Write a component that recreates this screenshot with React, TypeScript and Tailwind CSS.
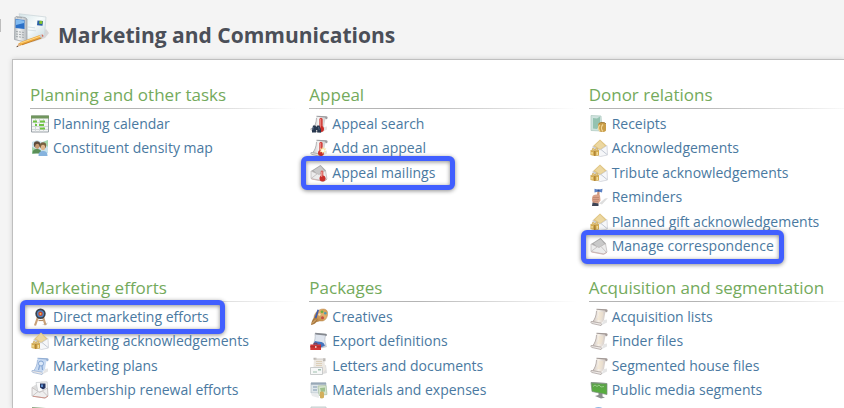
import type { ReactNode } from "react";

interface TaskLink {
  label: string;
  icon: ReactNode;
  highlight?: string;
}

interface TaskGroup {
  title: string;
  links: TaskLink[];
}

function Icon({ children }: { children: ReactNode }) {
  return (
    <svg viewBox="0 0 18 18" className="h-[18px] w-[18px] shrink-0" aria-hidden="true">
      <defs>
        <linearGradient id="paper" x1="0" y1="0" x2="1" y2="0">
          <stop offset="0" stopColor="#c9c0bc" />
          <stop offset="0.45" stopColor="#f6f0e8" />
          <stop offset="1" stopColor="#cfc6c1" />
        </linearGradient>
        <linearGradient id="silver" x1="0" y1="0" x2="1" y2="0">
          <stop offset="0" stopColor="#c4c4c4" />
          <stop offset="0.45" stopColor="#f4f4f4" />
          <stop offset="1" stopColor="#cdcdcd" />
        </linearGradient>
        <linearGradient id="wood" x1="0" y1="1" x2="1" y2="0">
          <stop offset="0" stopColor="#b07b3c" />
          <stop offset="0.6" stopColor="#e3b06c" />
          <stop offset="1" stopColor="#d0924c" />
        </linearGradient>
        <linearGradient id="screen" x1="0" y1="0" x2="0" y2="1">
          <stop offset="0" stopColor="#5da04c" />
          <stop offset="1" stopColor="#56b13b" />
        </linearGradient>
      </defs>
      {children}
    </svg>
  );
}

function CalendarIcon() {
  return (
    <Icon>
      <path d="M.5 1h17v16H.5z" fill="#f4f5f6" stroke="#9ba2a8" />
      <path d="M0 .5h18v3H0z" fill="#71965e" />
      <path d="M1 7.5h16M1 11.5h16M1 14.5h16M4.5 4v12.500M8.500 4v12.500M12.500 4v12.500" stroke="#d3d8da" fill="none" />
      <path d="M2 6.500h4M9 6.500h5M8 10h5M4 10h2M9 13.500h5" stroke="#70c443" strokeWidth="1.800" />
    </Icon>
  );
}

function MapIcon() {
  return (
    <Icon>
      <path d="M1 3l5-2 5 2 6-2v13l-6 2-5-2-5 1z" fill="#c9e3ec" />
      <path d="M1 8l4 2v4l-4 1zM12 3l5-2v7z" fill="#a5d7ac" />
      <circle cx="6" cy="5.500" r="3.200" fill="#5b4b3c" />
      <ellipse cx="6.300" cy="7.300" rx="2.200" ry="2.600" fill="#c79b73" />
      <path d="M1.500 14.500c0-3.500 2-4.500 4.500-4.500s4.500 1 4.500 4.500z" fill="#5b8f57" />
      <circle cx="12" cy="6.500" r="3.200" fill="#77603f" />
      <ellipse cx="12" cy="8.500" rx="2.200" ry="2.700" fill="#dfb68d" />
      <path d="M7.500 17c0-4 2-5 4.500-5s4.500 1 4.500 5z" fill="#86b3de" />
    </Icon>
  );
}

function Scroll({ fill = "url(#paper)", edge = "#a39a97" }: { fill?: string; edge?: string }) {
  return (
    <>
      <path d="M11 17.500l6-3v-3l-3 .5z" fill="#d4d4d4" opacity=".6" />
      <path d="M6.500 1.500h9.500c-.8 3.500-1.500 7-2 10.500l-3 4L2.500 14C5 11 6.500 7 6.500 1.500z" fill={fill} />
      <path d="M6.500 3c-.2 4.500-1.500 8-4 11" fill="none" stroke={edge} strokeWidth=".7" />
      <path d="M6.500.8l10 .5c1.500.3 1.500 2.500.2 3l-1.300-.2c.3-1-.2-1.600-1-1.600L6.500 1.800z" fill={edge} />
      <path d="M1 13.500l9.500 1.500c1 .5 1.500 2 .5 2.500L2 15.500c-1-.4-1.400-1.200-1-2z" fill="#efebe8" stroke={edge} strokeWidth=".7" />
    </>
  );
}

function ScrollIcon() {
  return (
    <Icon>
      <Scroll />
      <path d="M8.500 5h4.500M8.500 7h4.500M8 9h4.500M7 11h4.500" stroke="#f1e2c8" />
    </Icon>
  );
}

function PlanIcon() {
  return (
    <Icon>
      <Scroll fill="#c8daf1" edge="#93aed3" />
      <circle cx="10" cy="6.500" r="2.500" fill="#dbe8f8" stroke="#84a5d3" />
      <path d="M8.500 9l-1 4M11 9l.5 4" stroke="#84a5d3" strokeWidth="1.200" />
    </Icon>
  );
}

function Thermometer() {
  return (
    <>
      <path d="M11 4.500v8" stroke="#d4453f" strokeWidth="3.400" strokeLinecap="round" />
      <circle cx="11" cy="14" r="3" fill="#cb2f2a" />
      <path d="M10.300 4v8.500" stroke="#f4a59e" strokeWidth=".8" />
    </>
  );
}

function AppealSearchIcon() {
  return (
    <Icon>
      <Scroll fill="url(#silver)" edge="#9d9da0" />
      <Thermometer />
      <path d="M3 10.500h2.500l.8 1.500 1-1.500H9.500l1.500 4.500v2.500H7.200V15h-1v2.500H2V15z" fill="#29384f" />
      <path d="M3.500 12l-.8 3M8.500 12l.8 3" stroke="#5a7090" strokeWidth=".8" />
    </Icon>
  );
}

function AddAppealIcon() {
  return (
    <Icon>
      <Scroll fill="url(#silver)" edge="#9d9da0" />
      <Thermometer />
      <path d="M13 7.500l1 2.200 2.300-.4-1.300 2.200 1.300 1.800-2.400-.2-.9 2.200-1.100-2.200-2.200.2 1.400-1.800-1.200-2.200 2.200.4z" fill="#fbe7a2" />
      <circle cx="13" cy="11.500" r="1.500" fill="#fffbe8" />
    </Icon>
  );
}

function OpenEnvelope() {
  return (
    <>
      <path d="M1 7L10.500 1l5.500 5.500-2 5-8 1z" fill="#a9a9a9" />
      <path d="M3.500 6.500l7-4.500 4 5-6 4z" fill="#c9c9c9" />
      <path d="M1 7l8 3.500 6.500-4 1.500 8.500-3 2L1 14.500z" fill="#ececec" stroke="#b9b5b5" strokeWidth=".7" />
      <path d="M1 14.500L7 10M11 9.500l5.500 6" fill="none" stroke="#bfbbbb" strokeWidth=".8" />
      <path d="M1.500 15l12 2.300 3.500-2" fill="none" stroke="#c9a9a6" strokeWidth=".8" />
    </>
  );
}

function MailingIcon() {
  return (
    <Icon>
      <OpenEnvelope />
      <path d="M12 8v6" stroke="#dc6963" strokeWidth="2.800" strokeLinecap="round" />
      <circle cx="12.500" cy="14.500" r="3" fill="#c9302c" />
      <path d="M11.700 8v5" stroke="#f4b1ab" strokeWidth=".8" />
    </Icon>
  );
}

function EnvelopeIcon() {
  return (
    <Icon>
      <OpenEnvelope />
    </Icon>
  );
}

function RenewalIcon() {
  return (
    <Icon>
      <path d="M1 6L10 .5h6.500l.5 14-3 2.500L1 15z" fill="#dedede" />
      <path d="M5 1.500l11-.5.500 8L7 11z" fill="#fbfbfb" stroke="#c6c8cc" strokeWidth=".7" />
      <path d="M1 6.500l7.500 5L16.500 7l.5 8-3 2L1 15z" fill="#efefef" stroke="#bbb6b6" strokeWidth=".7" />
      <path d="M9 2.500h5.500v4.500l-2.500 1.500-3-2z" fill="#243563" />
      <path d="M10 3.500h2V6h-2z" fill="#5f8fd0" />
      <path d="M1.500 15l5.500-4.500M11.500 10l5 5" stroke="#c0bbbb" strokeWidth=".8" />
      <path d="M2 15.300l12 1.700 3-2" fill="none" stroke="#cc8e83" strokeWidth=".9" />
    </Icon>
  );
}

function ReceiptIcon() {
  return (
    <Icon>
      <path d="M1 .5l10 .5 1 15-11-.5z" fill="#cfe3de" stroke="#b3cdc4" strokeWidth=".8" />
      <path d="M3 3l4 .5 3-2v8L7 14l-4-.5z" fill="#94c2b0" />
      <path d="M8 9c1.500-2.500 8-2.500 8 .5v6c-1.500 2-5 2-7 .5z" fill="#c99d48" />
      <path d="M10 10c-2 1.500-2 4.500 0 6M13 9.500c-2 2-2 5 0 7" fill="none" stroke="#f1d595" strokeWidth="1.300" />
      <path d="M9 8.500c2-1.500 6-1.500 7 .5" fill="none" stroke="#94702f" strokeWidth=".8" />
    </Icon>
  );
}

function AcknowledgementIcon() {
  return (
    <Icon>
      <path d="M2.500 7.500L10 .5l7 6.500-7 5z" fill="#e0c583" />
      <path d="M5 6.500L10 1.800 15 7l-5 3z" fill="#ecd7a0" />
      <path d="M3 7.500l7 3.500 7-4.500.5 9.500-7 1.500L3 15z" fill="#f6f7f9" stroke="#c8ccd4" strokeWidth=".7" />
      <path d="M11 10.500l6 5M3.500 8l5 4" stroke="#bcc4d0" strokeWidth=".9" />
      <path d="M.5 11l4 .5 4.500-.5v5.500l-4.500.5-4-1z" fill="#d3ab50" />
      <path d="M2 10c1-1.500 2.500-.5 3 .8.500-1.300 2-2.300 3-.8.300 1-2 1.500-3 1.300-1 .2-3.300-.3-3-1.300z" fill="#f0d78e" stroke="#b98d3a" strokeWidth=".5" />
      <path d="M4.200 12h1.200v5H4.200z" fill="#a97c31" />
      <path d="M6.500 13H8v3H6.500zM1.300 13h1.500v2.500H1.300z" fill="#f3dc98" />
    </Icon>
  );
}

function ReminderIcon() {
  return (
    <Icon>
      <path d="M9 15.500l6-5 3-.5-6 6.500z" fill="#dedede" />
      <path d="M7 7l.5-4.500h2L9.500 8z" fill="#cb947b" />
      <path d="M3 7.500c2-1.500 5.500-1.500 7 0l.5 5-2.500 3.500-5-1c-1.500-2-1.500-5.500 0-7.500z" fill="#d9a289" />
      <path d="M3 9.500h6M3 11.500h6M3 13.300h5" stroke="#b8806b" strokeWidth=".7" />
      <path d="M2.500 14.500l6 1V18h-6.500z" fill="#3d4455" />
      <path d="M4.500.8l4 1 4-1-.5 3.700-3.500-1-4 1z" fill="#5c82c5" />
      <path d="M7.500 1.500h2v2h-2z" fill="#2f5297" />
    </Icon>
  );
}

function TargetIcon() {
  return (
    <Icon>
      <path d="M11 16.500l6-2-2 3z" fill="#d2d2d2" />
      <path d="M7 9L4 17.500M12 9l2.500 8" stroke="#c9a077" strokeWidth="2.200" />
      <path d="M7.500 12.500h4.500" stroke="#b48d65" strokeWidth="1.200" />
      <circle cx="9.500" cy="5.800" r="5.200" fill="#3b424d" />
      <circle cx="9.500" cy="5.800" r="3.500" fill="#5086c6" />
      <circle cx="9.500" cy="5.800" r="2.200" fill="#cb4930" />
      <circle cx="9.500" cy="5.800" r=".9" fill="#f6cc5d" />
    </Icon>
  );
}

function PaletteIcon() {
  return (
    <Icon>
      <path d="M4 12C3 6 8 .8 13.500 1c4 .2 4.500 3.500 4 6-.5 4-3.500 6.500-6.500 6-3-.5-5 2.500-7-1z" fill="url(#wood)" stroke="#b88a50" strokeWidth=".5" />
      <circle cx="12" cy="3.800" r="1.400" fill="#70af43" />
      <circle cx="15.300" cy="5.200" r="1.300" fill="#4f9bb3" />
      <circle cx="12.500" cy="9.800" r="1.500" fill="#c54b3f" />
      <circle cx="9.500" cy="6.500" r="1.200" fill="#f4dfba" />
      <path d="M7.500 1.500L9 2 6.500 10.500 4.500 10z" fill="#3f5cac" />
      <path d="M4.500 9.500l3 1.500c0 3-3 5.500-6.500 6 .5-3 1-5.500 3.500-7.500z" fill="#a8783f" />
      <path d="M2 15.500l4-4" stroke="#e2b87c" />
    </Icon>
  );
}

function ExportIcon() {
  return (
    <Icon>
      <path d="M11 16.500l6-1.500-1-3z" fill="#c9cdd4" />
      <path d="M5 1.500l11 1c-1.500 3.500-1.500 6.500 0 10l-4 3-9-3C5 9 5.500 5 5 1.500z" fill="#dfe5ee" stroke="#a9b0bb" strokeWidth=".6" />
      <path d="M5 .8l11 1c1.200.3 1.300 2 .2 2.200L15 3.500 5.500 2.500z" fill="#85898f" />
      <path d="M5 9c3 1 6 0 8.500 2l1.500 2.500-4 2-8-3z" fill="#4473bd" />
      <path d="M.3 12.500h10.700V18H.3z" fill="#d13535" />
      <path d="M4 12.500v-1.200h3v1.200M0 14.800h11" fill="none" stroke="#96282b" strokeWidth=".8" />
      <path d="M5 14h1.500v2H5z" fill="#f0bcb6" />
    </Icon>
  );
}

function LettersIcon() {
  return (
    <Icon>
      <path d="M11 17.500l6-1.500-1-8-3 1z" fill="#dedede" />
      <path d="M4 2h10c1 3 .5 7 2 10l-3 4H3z" fill="#ece8e2" />
      <path d="M3.500.8h3v2h-3zM13 1.300h2.500v3H13z" fill="#bbb7b3" />
      <path d="M5 1.500h9v1H5z" fill="#d1cdc9" />
      <path d="M6 4.500h6M6 6.500h6M6 8.500h6" stroke="#dccfb8" />
      <path d="M.5 10.500h12v7H.5z" fill="#f7f8f8" stroke="#bfc1c1" strokeWidth=".8" />
      <path d="M8 12h3v1.500H8zM3 14.500h4v1H3z" fill="#9fbfae" />
    </Icon>
  );
}

function MaterialsIcon() {
  return (
    <Icon>
      <path d="M1 2h15v10H1z" fill="#dfe6ea" stroke="#b3bfc6" strokeWidth=".7" />
      <path d="M1 1.500h15v2.200H1z" fill="#98a8b6" />
      <path d="M3 5h4v2H3zM3 8h4v2H3z" fill="#aebfcc" />
      <path d="M8 5l8-.5 1 9-8 1z" fill="#d6e5cf" stroke="#a9bfa1" strokeWidth=".7" />
      <path d="M10 7l5-.5v4l-4 .5z" fill="#9dbf8d" />
      <path d="M10 11c2-1 4 0 4 1v4.500c-1.500 1.500-4 1-4 0z" fill="#d3af5c" />
      <path d="M.8 12l8 1.500V17L2 15z" fill="#e9ebec" />
    </Icon>
  );
}

function MediaIcon() {
  return (
    <Icon>
      <path d="M8.500 11h4v4.500l2.500 1-4 1-6-2.500 3.500-1z" fill="#8a8e8d" />
      <path d="M1 1.500l16 1v11L2 10.500z" fill="url(#screen)" stroke="#7d8c81" strokeWidth=".7" />
      <path d="M3 5.500l2-1.500 2 1.500L9 4l2 2 3-.5" fill="none" stroke="#a5d698" strokeWidth=".8" />
      <path d="M1 1.200l15 .8v.8L1 2.200z" fill="#89978a" />
    </Icon>
  );
}

function MoneyIcon() {
  return (
    <Icon>
      <path d="M1 1l14 1 2 3v11H2z" fill="#8ba681" />
      <path d="M3 3l12 1v4H3z" fill="#c4d5b9" />
    </Icon>
  );
}

function DocumentIcon() {
  return (
    <Icon>
      <path d="M1 1h15v16H1z" fill="#dfe5e5" stroke="#c4cece" />
      <path d="M9 2h5v5H9z" fill="#8eb5bd" />
    </Icon>
  );
}

function GlobeIcon() {
  return (
    <Icon>
      <circle cx="8.500" cy="9" r="8" fill="#8eb8e5" />
      <path d="M4 3l5-1 2 3-5 3z" fill="#b9d6ec" />
    </Icon>
  );
}

function CommunicationsLogo() {
  return (
    <svg viewBox="0 0 36 36" className="h-9 w-9 shrink-0" aria-hidden="true">
      <defs>
        <linearGradient id="card" x1="0" y1="0" x2="1" y2="1">
          <stop offset="0" stopColor="#d4e4e8" />
          <stop offset=".5" stopColor="#f8fcfc" />
          <stop offset="1" stopColor="#c8d9df" />
        </linearGradient>
        <linearGradient id="phone" x1="0" y1="0" x2="1" y2="0">
          <stop offset="0" stopColor="#b4b9bd" />
          <stop offset=".35" stopColor="#f4f5f5" />
          <stop offset="1" stopColor="#b4b9bd" />
        </linearGradient>
      </defs>
      <path d="M13 31l18-6 4-5-3-4-14 13z" fill="#cfd0d1" opacity=".8" />
      <path d="M5 .8l27 3.200-1.500 18.500-6 2-12 2z" fill="url(#card)" stroke="#cdd7da" strokeWidth=".8" />
      <path d="M14 14l7 .8M14 17l8 .8" stroke="#d6e0e3" />
      <path d="M23.500 7.500l5.500.5-.5 4.800-5.500-.5z" fill="#2a5fa6" />
      <path d="M25.500 7.800l3 .2-.3 3-3-.3z" fill="#86c52c" />
      <path d="M1 4.500l1-1 9 1 2 1.500v21L9 28.500.5 26.500z" fill="url(#phone)" stroke="#a0a5a9" strokeWidth=".8" />
      <path d="M1.500 6l9 1v9L1.500 15z" fill="#2a70c8" />
      <path d="M2 6.500l8 1v2.500L2 12z" fill="#82bbf0" />
      <path d="M2 18.500l8 1M2 21l8 1M2 23.500l8 1" stroke="#a3a9ac" strokeDasharray="2 1" />
      <path d="M3 4.800h5" stroke="#8e9397" strokeWidth=".8" />
      <path d="M4.500 30.500l3-1.800L26.500 21.800l1.300 3L8 32l-4 .8z" fill="#eeaa3c" />
      <path d="M6.500 30l20.500-7" stroke="#ffd98a" />
      <path d="M8 31.800l19.500-6.800" stroke="#b9701e" strokeWidth=".8" />
      <path d="M25.500 22.200l2-.7 1.200 2.700-2 .8z" fill="#c9cdd1" />
      <path d="M27.500 21.500c1.500-.6 2.700 1.700 1.200 2.700z" fill="#d76755" />
      <path d="M2.500 34l2.300-3.600 2.700 2.100z" fill="#ddb28a" />
      <path d="M2.300 34.200l.9-1.500 1.200.8z" fill="#49392d" />
    </svg>
  );
}

const groups: TaskGroup[] = [
  {
    title: "Planning and other tasks",
    links: [
      { label: "Planning calendar", icon: <CalendarIcon /> },
      { label: "Constituent density map", icon: <MapIcon /> },
    ],
  },
  {
    title: "Appeal",
    links: [
      { label: "Appeal search", icon: <AppealSearchIcon /> },
      { label: "Add an appeal", icon: <AddAppealIcon /> },
      { label: "Appeal mailings", icon: <MailingIcon />, highlight: "-left-2 w-[154px]" },
    ],
  },
  {
    title: "Donor relations",
    links: [
      { label: "Receipts", icon: <ReceiptIcon /> },
      { label: "Acknowledgements", icon: <AcknowledgementIcon /> },
      { label: "Tribute acknowledgements", icon: <AcknowledgementIcon /> },
      { label: "Reminders", icon: <ReminderIcon /> },
      { label: "Planned gift acknowledgements", icon: <AcknowledgementIcon /> },
      { label: "Manage correspondence", icon: <EnvelopeIcon />, highlight: "-left-2 w-[203px]" },
    ],
  },
  {
    title: "Marketing efforts",
    links: [
      { label: "Direct marketing efforts", icon: <TargetIcon />, highlight: "-left-2.5 w-[205px]" },
      { label: "Marketing acknowledgements", icon: <AcknowledgementIcon /> },
      { label: "Marketing plans", icon: <PlanIcon /> },
      { label: "Membership renewal efforts", icon: <RenewalIcon /> },
      { label: "", icon: <MoneyIcon /> },
    ],
  },
  {
    title: "Packages",
    links: [
      { label: "Creatives", icon: <PaletteIcon /> },
      { label: "Export definitions", icon: <ExportIcon /> },
      { label: "Letters and documents", icon: <LettersIcon /> },
      { label: "Materials and expenses", icon: <MaterialsIcon /> },
      { label: "", icon: <DocumentIcon /> },
    ],
  },
  {
    title: "Acquisition and segmentation",
    links: [
      { label: "Acquisition lists", icon: <ScrollIcon /> },
      { label: "Finder files", icon: <ScrollIcon /> },
      { label: "Segmented house files", icon: <ScrollIcon /> },
      { label: "Public media segments", icon: <MediaIcon /> },
      { label: "", icon: <GlobeIcon /> },
    ],
  },
];

function TaskSection({ group }: { group: TaskGroup }) {
  return (
    <section>
      <h2 className="h-[26px] whitespace-nowrap text-[17px] leading-[26px] text-[#74aa5c]">{group.title}</h2>
      <div className="mb-0.5 h-px bg-linear-to-r from-[#b4b4b4] from-40% to-transparent" />
      <ul>
        {group.links.map((link, i) => (
          <li key={i} className="relative flex items-center odd:h-[25px] even:h-6">
            <a href="#" className="flex items-center gap-1 whitespace-nowrap pl-px text-[14px] leading-5 text-[#4a79a1] hover:underline">
              {link.icon}
              {link.label}
            </a>
            {link.highlight && (
              <span
                className={`pointer-events-none absolute -top-1 h-[34px] rounded-md border-[5px] border-[#415fff] drop-shadow-[0_1px_2px_rgba(0,0,0,0.45)] ${link.highlight}`}
              />
            )}
          </li>
        ))}
      </ul>
    </section>
  );
}

export default function App() {
  return (
    <div className="flex h-screen flex-col overflow-hidden bg-[#f4f4f4] font-['Open_Sans','Noto_Sans',sans-serif]">
      <header className="flex h-[59px] shrink-0 items-start pt-[13px]">
        <div className="mt-1.5 h-[13px] w-px bg-[#bdbdbd]" />
        <div className="ml-[13px]">
          <CommunicationsLogo />
        </div>
        <h1 className="ml-2 mt-1.5 whitespace-nowrap text-[21px] font-bold leading-8 text-[#4b4f58]">
          Marketing and Communications
        </h1>
      </header>
      <main className="ml-3 min-h-0 flex-1 overflow-hidden border-l border-t border-[#bfbfbf] bg-white pl-[17px] pt-[22px] shadow-[0_0_5px_rgba(0,0,0,0.15)]">
        <div className="-mr-3 grid grid-cols-3 gap-x-3 gap-y-[17px]">
          {groups.map((group) => (
            <TaskSection key={group.title} group={group} />
          ))}
        </div>
      </main>
    </div>
  );
}
